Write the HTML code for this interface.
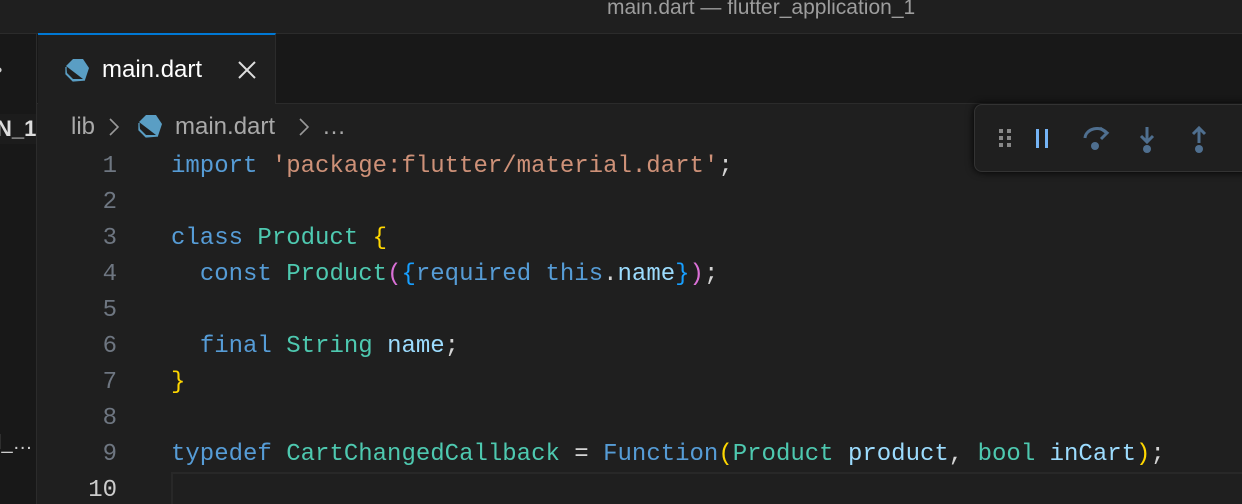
<!DOCTYPE html><html><head><style>
html,body{margin:0;width:1242px;height:504px;overflow:hidden}
body{background:#1f1f1f;position:relative;font-family:"Liberation Sans",sans-serif}
.title{position:absolute;left:0;top:0;width:1242px;height:33px;background:#1f1f1f;border-bottom:1px solid #2b2b2b;color:#9d9d9d;font-size:21px;line-height:16px}
.side{position:absolute;left:0;top:34px;width:36px;height:470px;background:#181818;border-right:1px solid #2b2b2b}
.tabbar{position:absolute;left:37px;top:34px;right:0;height:69px;background:#181818;border-bottom:1px solid #2b2b2b}
.tab{position:absolute;left:38px;top:33px;width:238px;height:71px;background:#1f1f1f;border-top:2px solid #0078d4;border-right:1px solid #2b2b2b;box-sizing:border-box}
.mono{font-family:"Liberation Mono",monospace;font-size:24px}
.ln{position:absolute;left:60px;width:57px;text-align:right;color:#6e7681}
.code{position:absolute;left:171px;white-space:pre;color:#d4d4d4}
.k{color:#569cd6}.s{color:#ce9178}.c{color:#4ec9b0}.v{color:#9cdcfe}.y{color:#ffd700}.p{color:#da70d6}.b{color:#179fff}
.bc{position:absolute;top:113px;color:#a9a9a9;font-size:24px;white-space:pre}
</style></head><body>
<div class="title"><span style="position:absolute;left:607px;top:0;">main.dart — flutter_application_1</span></div>
<div class="side">
<div style="position:absolute;left:-4px;top:26px;color:#ccc;font-size:18px">•</div>
<div style="position:absolute;left:0;top:80px;width:36px;height:30px;background:#1c1c1c"></div>
<div style="position:absolute;left:-4px;top:82px;color:#ddd;font-size:22px;font-weight:bold">N_1</div>
<div style="position:absolute;left:-3px;top:398px;color:#ccc;font-size:20px">l_…</div>
</div>
<div class="tabbar"></div>
<div class="tab">
<svg style="position:absolute;left:27px;top:23px" width="26" height="26" viewBox="0 0 26 26"><path d="M8 1 L18 1 L24 10 L20 22 L8 23 L1 16 L1 8 Z" fill="#5a9ec4"/><path d="M1 8 L2 15 L8 21 L18 21 Z" fill="#1f1f1f"/><path d="M1 9 L1 16 L8 23 L20 22" stroke="#5a9ec4" stroke-width="1.3" fill="none"/></svg>
<span style="position:absolute;left:64px;top:21px;color:#fff;font-size:24px">main.dart</span>
<svg style="position:absolute;left:200px;top:26px" width="18" height="18"><path d="M1 1L17 17M17 1L1 17" stroke="#ddd" stroke-width="2"/></svg>
</div>
<div class="bc" style="left:71px">lib</div>
<svg style="position:absolute;left:108px;top:117px" width="12" height="20"><path d="M2 2L10 10L2 18" stroke="#999" stroke-width="1.6" fill="none"/></svg>
<svg style="position:absolute;left:138px;top:114px" width="26" height="26" viewBox="0 0 26 26"><path d="M8 1 L18 1 L24 10 L20 22 L8 23 L1 16 L1 8 Z" fill="#5a9ec4"/><path d="M1 8 L2 15 L8 21 L18 21 Z" fill="#1f1f1f"/><path d="M1 9 L1 16 L8 23 L20 22" stroke="#5a9ec4" stroke-width="1.3" fill="none"/></svg>
<div class="bc" style="left:175px">main.dart</div>
<svg style="position:absolute;left:298px;top:117px" width="12" height="20"><path d="M2 2L10 10L2 18" stroke="#999" stroke-width="1.6" fill="none"/></svg>
<div class="bc" style="left:322px">…</div>
<div style="position:absolute;left:974px;top:104px;width:280px;height:66px;background:#1f1f1f;border:1px solid #333;border-radius:8px;box-shadow:0 0 8px #000"></div>
<svg style="position:absolute;left:995px;top:125px" width="260" height="32">
<g fill="#888"><rect x="4" y="4" width="4" height="4"/><rect x="12" y="4" width="4" height="4"/><rect x="4" y="11" width="4" height="4"/><rect x="12" y="11" width="4" height="4"/><rect x="4" y="18" width="4" height="4"/><rect x="12" y="18" width="4" height="4"/></g>
<g fill="#75b4f5"><rect x="41" y="4" width="3" height="19"/><rect x="50" y="4" width="3" height="19"/></g>
<g stroke="#4f6f8f" stroke-width="3" fill="none"><path d="M90 13 A12 10 0 0 1 112 8"/><path d="M105 3 L112 8 L106 14"/><path d="M152 2 V16 M146 11 L152 17 L158 11"/><path d="M204 4 V18 M198 9 L204 3 L210 9"/></g>
<g fill="#4f6f8f"><circle cx="100" cy="21" r="4"/><circle cx="152" cy="24" r="4"/><circle cx="204" cy="24" r="4"/></g>
</svg>
<div style="position:absolute;left:171px;top:472px;width:1080px;height:40px;border:2px solid #282828;box-sizing:border-box"></div>
<div class="mono">
<div class="ln" style="top:153px">1</div><div class="ln" style="top:189px">2</div><div class="ln" style="top:225px">3</div><div class="ln" style="top:261px">4</div><div class="ln" style="top:297px">5</div><div class="ln" style="top:333px">6</div><div class="ln" style="top:369px">7</div><div class="ln" style="top:405px">8</div><div class="ln" style="top:441px">9</div><div class="ln" style="top:477px;color:#ccc">10</div>
<div class="code" style="top:153px"><span class="k">import</span> <span class="s">'package:flutter/material.dart'</span>;</div>
<div class="code" style="top:225px"><span class="k">class</span> <span class="c">Product</span> <span class="y">{</span></div>
<div class="code" style="top:261px">  <span class="k">const</span> <span class="c">Product</span><span class="p">(</span><span class="b">{</span><span class="k">required</span> <span class="k">this</span>.<span class="v">name</span><span class="b">}</span><span class="p">)</span>;</div>
<div class="code" style="top:333px">  <span class="k">final</span> <span class="c">String</span> <span class="v">name</span>;</div>
<div class="code" style="top:369px"><span class="y">}</span></div>
<div class="code" style="top:441px"><span class="k">typedef</span> <span class="c">CartChangedCallback</span> = <span class="k">Function</span><span class="y">(</span><span class="c">Product</span> <span class="v">product</span>, <span class="c">bool</span> <span class="v">inCart</span><span class="y">)</span>;</div>
</div>
</body></html>
